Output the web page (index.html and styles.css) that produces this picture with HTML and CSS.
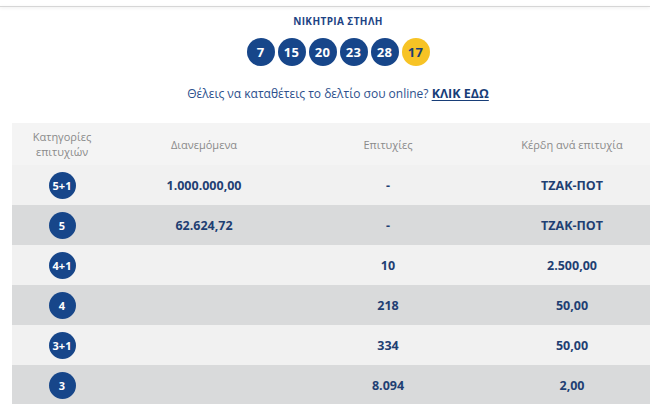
FILE: index.html
```html
<!DOCTYPE html>
<html lang="el">
<head>
<meta charset="utf-8">
<link rel="stylesheet" href="styles.css">
</head>
<body>
<div class="topbar"></div>
<div class="wrap">
  <div class="title">ΝΙΚΗΤΡΙΑ ΣΤΗΛΗ</div>
  <div class="balls">
    <span class="ball">7</span>
    <span class="ball">15</span>
    <span class="ball">20</span>
    <span class="ball">23</span>
    <span class="ball">28</span>
    <span class="ball joker">17</span>
  </div>
  <p class="online">Θέλεις να καταθέτεις το δελτίο σου online? <a class="cta" href="#">ΚΛΙΚ ΕΔΩ</a></p>
  <div class="table">
    <div class="row head">
      <div class="c c1">Κατηγορίες<br>επιτυχιών</div>
      <div class="c">Διανεμόμενα</div>
      <div class="c">Επιτυχίες</div>
      <div class="c">Κέρδη ανά επιτυχία</div>
    </div>
    <div class="row light">
      <div class="c c1"><span class="badge">5+1</span></div>
      <div class="c">1.000.000,00</div>
      <div class="c">-</div>
      <div class="c">ΤΖΑΚ-ΠΟΤ</div>
    </div>
    <div class="row dark">
      <div class="c c1"><span class="badge">5</span></div>
      <div class="c">62.624,72</div>
      <div class="c">-</div>
      <div class="c">ΤΖΑΚ-ΠΟΤ</div>
    </div>
    <div class="row light">
      <div class="c c1"><span class="badge">4+1</span></div>
      <div class="c"></div>
      <div class="c">10</div>
      <div class="c">2.500,00</div>
    </div>
    <div class="row dark">
      <div class="c c1"><span class="badge">4</span></div>
      <div class="c"></div>
      <div class="c">218</div>
      <div class="c">50,00</div>
    </div>
    <div class="row light">
      <div class="c c1"><span class="badge">3+1</span></div>
      <div class="c"></div>
      <div class="c">334</div>
      <div class="c">50,00</div>
    </div>
    <div class="row dark">
      <div class="c c1"><span class="badge">3</span></div>
      <div class="c"></div>
      <div class="c">8.094</div>
      <div class="c">2,00</div>
    </div>
  </div>
</div>
</body>
</html>
```

FILE: styles.css
```css
html, body {
  margin: 0;
  padding: 0;
  background: #ffffff;
  overflow: hidden;
  width: 650px;
  height: 404px;
}
body {
  font-family: "Open Sans", "Liberation Sans", sans-serif;
}
.topbar {
  margin-top: 6px;
  height: 1px;
  background: #d6d6d6;
  box-shadow: 0 1px 3px rgba(0,0,0,0.12);
}
.wrap {
  margin-left: 12px;
  width: 652px;
  display: flex;
  flex-direction: column;
  align-items: center;
}
.title {
  margin-top: 8px;
  font-size: 10px;
  font-weight: 700;
  letter-spacing: 0.4px;
  color: #1d4384;
  line-height: 12px;
}
.balls {
  margin-top: 11px;
  display: flex;
  gap: 3px;
}
.ball {
  width: 28px;
  height: 28px;
  border-radius: 50%;
  background: #17468a;
  color: #ffffff;
  font-weight: 700;
  font-size: 13px;
  display: flex;
  align-items: center;
  justify-content: center;
  letter-spacing: 0.2px;
}
.ball.joker {
  background: #f7c325;
  color: #1d3f73;
}
.online {
  margin: 19px 0 0 0;
  font-size: 12px;
  color: #2c4f8c;
  line-height: 17px;
}
.cta {
  color: #183e78;
  font-weight: 700;
  font-size: 12.5px;
  text-decoration: underline;
  text-underline-offset: 2px;
}
.table {
  margin-top: 21px;
  width: 652px;
  display: flex;
  flex-direction: column;
}
.row {
  display: grid;
  grid-template-columns: 100px 184px 184px 184px;
  height: 40px;
  align-items: center;
  font-size: 12.5px;
  font-weight: 700;
  color: #1f3f73;
}
.row.head {
  height: 42px;
  background: #f4f4f4;
  font-weight: 400;
  font-size: 11px;
  line-height: 15px;
  color: #8a8a8a;
}
.row.light { background: #f1f1f1; }
.row.dark { background: #d9dadb; }
.c {
  text-align: center;
  display: flex;
  justify-content: center;
  align-items: center;
}
.row.head .c { display: block; }
.badge {
  width: 27px;
  height: 27px;
  border-radius: 50%;
  background: #17468a;
  color: #ffffff;
  font-size: 11px;
  font-weight: 700;
  display: flex;
  align-items: center;
  justify-content: center;
}
```
